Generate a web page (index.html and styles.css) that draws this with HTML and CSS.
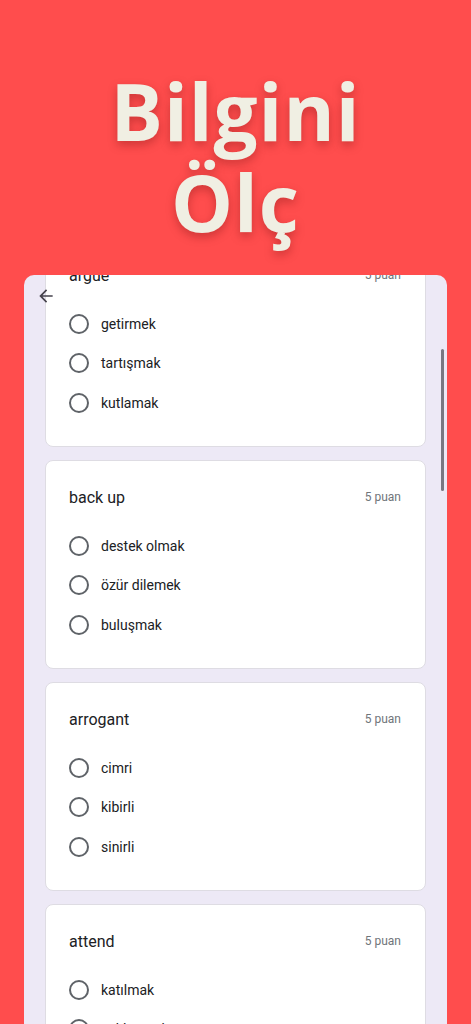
FILE: index.html
```html
<!DOCTYPE html>
<html lang="tr">
<head>
<meta charset="utf-8">
<title>Bilgini Ölç</title>
<link rel="stylesheet" href="styles.css">
</head>
<body>
<div class="screen">
  <h1 class="headline"><span>Bilgini</span><span>Ölç</span></h1>
  <div class="phone">
    <button class="back" aria-label="Geri">
      <svg width="20" height="20" viewBox="0 0 24 24"><path d="M20 11H7.83l5.59-5.59L12 4l-8 8 8 8 1.41-1.41L7.83 13H20v-2z" fill="#46434d"/></svg>
    </button>
    <div class="scrollbar"></div>
    <div class="list">
      <section class="card">
        <div class="q"><span class="q-title">argue</span><span class="q-pts">5 puan</span></div>
        <ul class="opts">
          <li><span class="radio"></span>getirmek</li>
          <li><span class="radio"></span>tartışmak</li>
          <li><span class="radio"></span>kutlamak</li>
        </ul>
      </section>
      <section class="card">
        <div class="q"><span class="q-title">back up</span><span class="q-pts">5 puan</span></div>
        <ul class="opts">
          <li><span class="radio"></span>destek olmak</li>
          <li><span class="radio"></span>özür dilemek</li>
          <li><span class="radio"></span>buluşmak</li>
        </ul>
      </section>
      <section class="card">
        <div class="q"><span class="q-title">arrogant</span><span class="q-pts">5 puan</span></div>
        <ul class="opts">
          <li><span class="radio"></span>cimri</li>
          <li><span class="radio"></span>kibirli</li>
          <li><span class="radio"></span>sinirli</li>
        </ul>
      </section>
      <section class="card">
        <div class="q"><span class="q-title">attend</span><span class="q-pts">5 puan</span></div>
        <ul class="opts">
          <li><span class="radio"></span>katılmak</li>
          <li><span class="radio"></span>saklanmak</li>
          <li><span class="radio"></span>beklemek</li>
        </ul>
      </section>
    </div>
  </div>
</div>
</body>
</html>
```

FILE: styles.css
```css
* { box-sizing: border-box; }
html, body { margin: 0; padding: 0; }
body {
  background: #ff4d4d;
  width: 471px;
  height: 1024px;
  overflow: hidden;
  font-family: Roboto, "Noto Sans", sans-serif;
}
.screen {
  display: flex;
  flex-direction: column;
  align-items: center;
  height: 1024px;
}
.headline {
  margin: 0;
  padding-top: 66px;
  height: 275px;
  display: flex;
  flex-direction: column;
  align-items: center;
  font-family: "Open Sans", "Noto Sans", sans-serif;
  font-weight: 700;
  font-size: 78px;
  line-height: 91px;
  color: #f0efe3;
  letter-spacing: 1px;
  text-shadow: 0 4px 10px rgba(110, 15, 15, 0.35);
}
.phone {
  position: relative;
  width: 423px;
  flex: 1;
  background: #ede9f6;
  border-radius: 10px 10px 0 0;
  overflow: hidden;
  padding: 0 21px;
}
.back {
  position: absolute;
  left: 12px;
  top: 11px;
  border: 0;
  background: none;
  padding: 0;
  width: 20px;
  height: 20px;
  z-index: 2;
}
.back svg { display: block; }
.scrollbar {
  position: absolute;
  right: 3px;
  top: 74px;
  width: 3px;
  height: 142px;
  border-radius: 2px;
  background: #7a7781;
}
.list {
  margin-top: -37px;
  display: flex;
  flex-direction: column;
  gap: 13px;
}
.card {
  background: #fff;
  border: 1px solid #dedce3;
  border-radius: 8px;
  height: 209px;
  padding: 24px 24px 0 23px;
}
.q {
  display: flex;
  justify-content: space-between;
  align-items: center;
  height: 24px;
}
.q-title {
  font-size: 16px;
  color: #202124;
}
.q-pts {
  font-size: 12px;
  color: #70757a;
}
.opts {
  list-style: none;
  margin: 17px 0 0;
  padding: 0;
}
.opts li {
  display: flex;
  align-items: center;
  height: 39.5px;
  font-size: 14px;
  color: #202124;
  gap: 12px;
}
.radio {
  width: 20px;
  height: 20px;
  border: 2px solid #5f6368;
  border-radius: 50%;
  flex: none;
}
```
